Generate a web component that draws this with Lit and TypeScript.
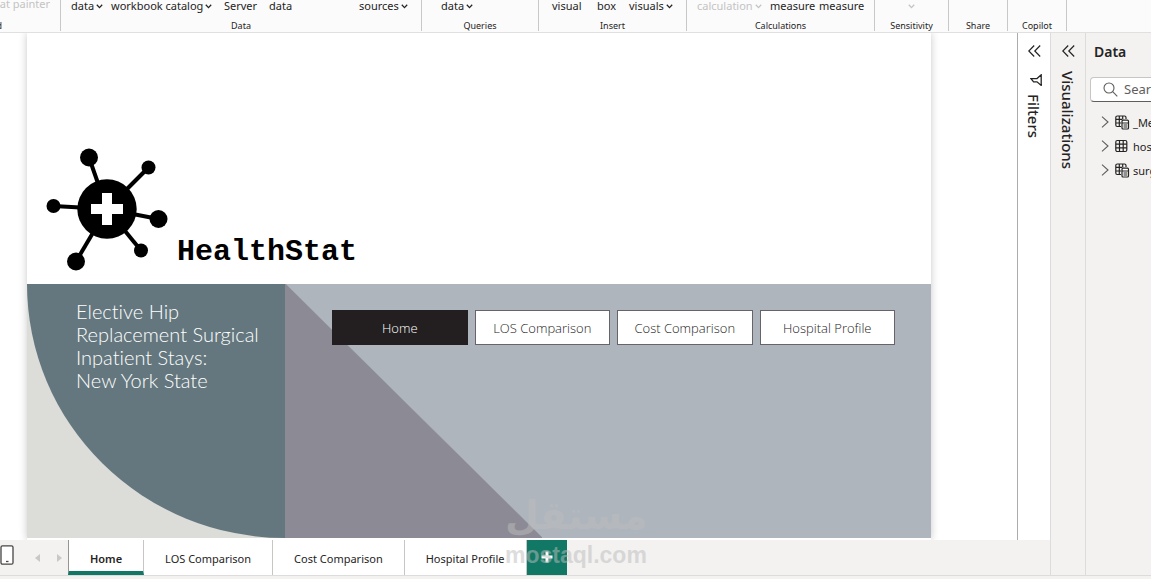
import { LitElement, html, css, svg, nothing } from "lit";
import { customElement, property } from "lit/decorators.js";

const PAGES = ["Home", "LOS Comparison", "Cost Comparison", "Hospital Profile"];

interface Command { label: string; menu?: boolean; disabled?: boolean }
interface Group { id: string; label: string; commands: Command[] }

const GROUPS: Group[] = [
  { id: "clipboard", label: "Clipboard", commands: [{ label: "Format painter", disabled: true }] },
  {
    id: "data", label: "Data", commands: [
      { label: "data", menu: true }, { label: "workbook catalog", menu: true },
      { label: "Server" }, { label: "data" }, { label: "sources", menu: true },
    ],
  },
  { id: "queries", label: "Queries", commands: [{ label: "data", menu: true }] },
  { id: "insert", label: "Insert", commands: [{ label: "visual" }, { label: "box" }, { label: "visuals", menu: true }] },
  {
    id: "calculations", label: "Calculations", commands: [
      { label: "calculation", menu: true, disabled: true }, { label: "measure" }, { label: "measure" },
    ],
  },
  { id: "sensitivity", label: "Sensitivity", commands: [{ label: "", menu: true, disabled: true }] },
  { id: "share", label: "Share", commands: [] },
  { id: "copilot", label: "Copilot", commands: [] },
];

const reset = css`
  * { box-sizing: border-box; }
  button, input { font: inherit; color: inherit; margin: 0; padding: 0; border: 0; background: none; border-radius: 0; }
  button { white-space: nowrap; cursor: pointer; }
  svg { display: block; flex: none; }
`;

@customElement("ribbon-bar")
class RibbonBar extends LitElement {
  static styles = [reset, css`
    :host { display: block; }
    .ribbon {
      display: grid;
      grid-template-columns: 61px 361px 117px 148px 188px 74px 59px 59px;
      height: 33px;
      overflow: hidden;
      background: #fbfbfb;
      border-bottom: 1px solid #e0e0e0;
      font-size: 11px;
      color: #252423;
    }
    .group {
      display: flex;
      flex-direction: column;
      height: 31px;
      border-right: 1px solid #c8c8c8;
      overflow: hidden;
    }
    .commands { display: grid; flex: none; height: 19px; align-items: start; justify-items: start; }
    .command { display: flex; align-items: center; gap: 2px; height: 12px; line-height: 12px; }
    .command:disabled { color: #c3c3c3; }
    .name { font-size: 9px; line-height: 14px; text-align: center; }
    .data .commands { grid-template-columns: 40px 113px 45px 90px auto; padding-left: 10px; }
    .queries .commands { padding-left: 19px; }
    .insert .commands { grid-template-columns: 45px 32px auto; padding-left: 13px; }
    .calculations .commands { grid-template-columns: 73px 49px auto; padding-left: 10px; }
    .sensitivity .commands { justify-items: center; }
    .clipboard .commands { justify-content: end; padding-right: 10px; }
    .clipboard .command { height: 8px; line-height: 8px; }
    .clipboard .name { align-self: end; padding-right: 58px; }
  `];

  render() {
    return html`<header class="ribbon">
      ${GROUPS.map((g) => html`<section class="group ${g.id}" aria-label=${g.label}>
        <div class="commands">
          ${g.commands.map((c) => html`<button class="command" ?disabled=${c.disabled} aria-label=${c.label || g.label}>
            ${c.label}${c.menu ? html`<svg width="7" height="5" viewBox="0 0 7 5" fill="none" stroke="currentColor" stroke-width="1.3"><path d="M.8.8 3.5 3.6 6.2.8" /></svg>` : nothing}
          </button>`)}
        </div>
        <div class="name">${g.label}</div>
      </section>`)}
    </header>`;
  }
}

@customElement("report-page")
class ReportPage extends LitElement {
  static styles = [reset, css`
    :host { display: block; }
    .page { display: flex; flex-direction: column; height: 100%; background: #fff; box-shadow: 0 0 8px rgba(0, 0, 0, .22); }
    .brand { flex: 1; display: flex; align-items: flex-end; padding: 0 0 13px 18px; }
    .title { margin: 0 0 1px 8px; font: bold 30px/36px "Liberation Mono", monospace; color: #000; }
    .hero { display: grid; grid-template-columns: 258px 1fr; height: 254px; margin-bottom: 2px; }
    .side { background: #dcddd9; }
    .intro {
      height: 100%;
      padding: 16px 0 0 49px;
      background: #64777e;
      border-bottom-left-radius: 100%;
      color: #fff;
      font: 300 20px/23px Lato, sans-serif;
      font-variant-ligatures: none;
    }
    .intro p { margin: 0; white-space: nowrap; }
    .body {
      padding: 26px 36px 0 47px;
      background: linear-gradient(to top right, #8c8b95 50%, transparent 50.3%) 0 0 / 257px 100% no-repeat #aeb5bd;
    }
    .nav { display: grid; grid-template-columns: repeat(4, 1fr); gap: 7px; }
    .link {
      height: 35px;
      background: #fff;
      border: 1px solid #66646a;
      color: #252423;
      font: 300 13px/20px "Open Sans", sans-serif;
    }
    .current { background: #231f20; border-color: #231f20; color: #fff; }
  `];

  render() {
    const nodes = [[69, 17.5, 9], [128.5, 27.5, 7], [33.5, 66, 7], [138.5, 79, 9], [121, 110.5, 7], [56, 121.5, 9]];
    return html`<article class="page">
      <div class="brand">
        <svg width="124" height="124" viewBox="25 7 124 124" role="img" aria-label="HealthStat logo">
          ${nodes.map(([x, y, r]) => svg`<path d="M87 69 ${x} ${y}" stroke="#000" stroke-width="4" /><circle cx=${x} cy=${y} r=${r} />`)}
          <circle cx="87" cy="69" r="29.7" />
          <path d="M82 53h10v11h11v10H92v11H82V74H71V64h11z" fill="#fff" />
        </svg>
        <h1 class="title">HealthStat</h1>
      </div>
      <div class="hero">
        <div class="side"><div class="intro">
          <p>Elective Hip</p><p>Replacement Surgical</p><p>Inpatient Stays:</p><p>New York State</p>
        </div></div>
        <div class="body">
          <nav class="nav">
            ${PAGES.map((p, i) => html`<button class="link ${i === 0 ? "current" : ""}">${p}</button>`)}
          </nav>
        </div>
      </div>
    </article>`;
  }
}

@customElement("page-tabs")
class PageTabs extends LitElement {
  static styles = [reset, css`
    :host { display: block; }
    .bar { position: relative; display: flex; height: 35px; background: #f3f2f1; font-size: 11px; color: #252423; }
    .tools { display: flex; align-items: center; width: 68px; padding-bottom: 5px; }
    .prev { margin: 5px 0 0 21px; }
    .next { margin: 5px 0 0 17px; }
    .tab { padding: 2px 21px 0; background: #fff; border-right: 1px solid #c8c6c4; }
    .current { border-left: 1px solid #979593; border-bottom: 4px solid #117865; padding-top: 6px; font-weight: 600; }
    .add { display: grid; place-items: center; width: 40px; padding-bottom: 2px; background: #117865; }
    .mark {
      position: absolute;
      left: 505px;
      top: -48px;
      width: 140px;
      color: #bcbcbc;
      opacity: .5;
      pointer-events: none;
      text-align: center;
      font-weight: 700;
      white-space: nowrap;
    }
    .arabic { font: 700 39px/48px "DejaVu Sans", sans-serif; }
    .latin { font: 700 23px/30px "Liberation Sans", sans-serif; }
  `];

  render() {
    return html`<footer class="bar">
      <div class="tools">
        <button aria-label="Mobile layout"><svg width="14" height="20" viewBox="0 0 14 20" fill="#fff" stroke="#484644" stroke-width="1.3"><rect x="1" y=".8" width="12" height="18.4" rx="1.5" /><path d="M6 16.5h2.5" /></svg></button>
        <button class="prev" aria-label="Previous page"><svg width="5" height="8" viewBox="0 0 5 8" fill="#c8c8c8"><path d="M5 0v8L0 4z" /></svg></button>
        <button class="next" aria-label="Next page"><svg width="5" height="8" viewBox="0 0 5 8" fill="#c8c8c8"><path d="M0 0v8l5-4z" /></svg></button>
      </div>
      ${PAGES.map((p, i) => html`<button class="tab ${i === 0 ? "current" : ""}">${p}</button>`)}
      <button class="add" aria-label="New page"><svg width="12" height="12" viewBox="0 0 12 12" stroke="#fff" stroke-width="3"><path d="M6 .5v11M.5 6h11" /></svg></button>
      <div class="mark"><div class="arabic" lang="ar">مستقل</div><div class="latin">mostaql.com</div></div>
    </footer>`;
  }
}

@customElement("side-rail")
class SideRail extends LitElement {
  @property() label = "";
  @property({ type: Boolean }) filter = false;

  static styles = [reset, css`
    :host { display: block; }
    .rail { display: flex; flex-direction: column; align-items: center; padding-top: 12px; color: #252423; }
    .label { writing-mode: vertical-rl; font-size: 15px; line-height: 20px; font-weight: 500; white-space: nowrap; margin-top: 14px; }
    .funnel { margin: 17px 0 0 3px; }
    .funnel + .label { margin-top: 8px; }
  `];

  render() {
    return html`<aside class="rail">
      <button aria-label="Expand ${this.label}"><svg width="13" height="12" viewBox="0 0 13 12" fill="none" stroke="#252423" stroke-width="1.2"><path d="M6.2.5.8 6l5.4 5.5M12.2.5 6.8 6l5.4 5.5" /></svg></button>
      ${this.filter ? html`<svg class="funnel" width="12" height="12" viewBox="0 0 12 12" fill="none" stroke="#252423" stroke-width="1.3"><path d="M11.2.8v10.6L7 7.800H3.600L1 4.600h6z" /></svg>` : nothing}
      <span class="label">${this.label}</span>
    </aside>`;
  }
}

@customElement("data-pane")
class DataPane extends LitElement {
  static styles = [reset, css`
    :host { display: block; }
    .pane { overflow: hidden; color: #252423; }
    .heading { margin: 0; padding: 8px 0 0 8px; font-size: 14px; line-height: 22px; font-weight: 600; }
    .search {
      display: flex;
      align-items: center;
      gap: 6px;
      width: 220px;
      height: 25px;
      margin: 14px 0 8px 4px;
      padding: 0 0 1px 12px;
      background: #fff;
      border: 1px solid #c8c6c4;
      border-bottom-color: #605e5c;
      border-radius: 4px;
      font-size: 13px;
    }
    .search input { width: 170px; outline: 0; }
    .search input::placeholder { color: #605e5c; opacity: 1; }
    .tables { margin: 0; padding: 0; list-style: none; font-size: 11px; }
    .row { display: flex; align-items: center; height: 24px; padding-left: 15px; white-space: nowrap; }
    .glyph { width: 15px; margin: 0 3px 0 6px; }
  `];

  private icon(measure: boolean) {
    return measure
      ? html`<svg class="glyph" width="15" height="15" viewBox="0 0 15 15" fill="none" stroke="#252423" stroke-width="1.2"><path d="M6 11.5H2.2A1.500 1.500 0 0 1 .8 10V2.500A1.500 1.500 0 0 1 2.300 1H9.500A1.500 1.500 0 0 1 11 2.500V4M.8 4.300H7M.8 8h5.500M4.300 1v10.500M7.700 1v3.500" /><rect x="7" y="5.200" width="6.500" height="8.800" rx="1" fill="#fff" /><path d="M7 8H13.500M8.500 10h3.800M8.500 12h3.800" /></svg>`
      : html`<svg class="glyph" width="15" height="15" viewBox="0 0 15 15" fill="none" stroke="#252423" stroke-width="1.2"><rect x=".8" y="1.500" width="11" height="11" rx="1.500" /><path d="M.8 5.200h11M.8 8.800h11M4.500 1.500v11M8.200 1.500v11" /></svg>`;
  }

  render() {
    const tables = [{ name: "_Measures", measure: true }, { name: "hospitals", measure: false }, { name: "surgical_stays", measure: true }];
    return html`<aside class="pane">
      <h2 class="heading">Data</h2>
      <label class="search">
        <svg width="15" height="15" viewBox="0 0 15 15" fill="none" stroke="#605e5c" stroke-width="1.1"><circle cx="6" cy="6" r="5" /><path d="m9.700 9.700 4.600 4.600" /></svg>
        <input type="search" placeholder="Search" aria-label="Search" />
      </label>
      <ul class="tables">
        ${tables.map((t) => html`<li class="row">
          <svg width="8" height="12" viewBox="0 0 8 12" fill="none" stroke="#605e5c" stroke-width="1.1"><path d="M1 .7 7 6l-6 5.300" /></svg>
          ${this.icon(t.measure)}<span>${t.name}</span>
        </li>`)}
      </ul>
    </aside>`;
  }
}

@customElement("app-root")
class AppRoot extends LitElement {
  static styles = css`
    :host { display: block; font-family: "Noto Sans", "Open Sans", sans-serif; }
    .app { display: flex; flex-direction: column; height: 100vh; overflow: hidden; background: #f3f2f1; }
    .main { flex: 1; display: flex; min-height: 0; border-bottom: 1px solid #dcdcdc; margin-bottom: 3px; }
    .left { flex: 1; min-width: 0; display: flex; flex-direction: column; }
    .work { flex: 1; display: flex; min-height: 0; background: #fff; }
    .canvas { flex: 1; display: flex; padding: 0 86px 0 27px; overflow: hidden; }
    .report { flex: 1; }
    .filters { width: 32px; border-left: 1px solid #acacac; }
    .visuals { width: 34px; border: solid #dcdcdc; border-width: 0 1px; }
    .fields { width: 65px; }
  `;

  render() {
    return html`<div class="app">
      <ribbon-bar></ribbon-bar>
      <div class="main">
        <div class="left">
          <div class="work">
            <div class="canvas"><report-page class="report"></report-page></div>
            <side-rail class="filters" label="Filters" filter></side-rail>
          </div>
          <page-tabs></page-tabs>
        </div>
        <side-rail class="visuals" label="Visualizations"></side-rail>
        <data-pane class="fields"></data-pane>
      </div>
    </div>`;
  }
}
